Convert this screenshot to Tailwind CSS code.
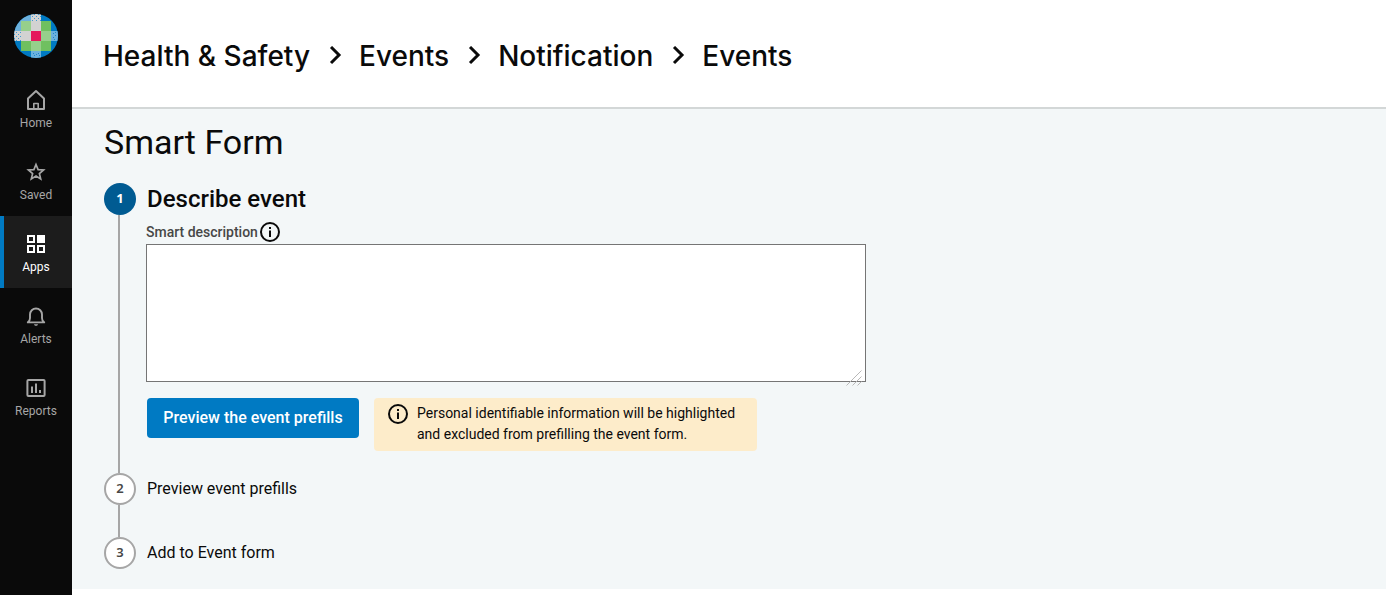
<!DOCTYPE html>
<html lang="en">
<head>
<meta charset="utf-8">
<meta name="viewport" content="width=device-width, initial-scale=1">
<title>Smart Form</title>
<script src="https://cdn.jsdelivr.net/npm/@tailwindcss/browser@4"></script>
</head>
<body class="bg-white font-['Roboto',sans-serif] text-[#0a0a0a]">
<div class="flex min-h-screen">
  <nav aria-label="Main" class="w-18 shrink-0 bg-[#0a0a0a] text-xs leading-4 text-[#a6a6a6]">
    <a href="#" aria-label="Start page" class="flex h-18 items-center justify-center">
      <svg class="size-11" viewBox="0 0 44 44" aria-hidden="true">
        <defs>
          <clipPath id="disc"><circle cx="22" cy="22" r="22"/></clipPath>
          <pattern id="dots" width="4" height="4" patternUnits="userSpaceOnUse"><rect width="4" height="4" fill="#d4d4d4"/><path d="M0 0h1v1H0zM2 2h1v1H2z" fill="#409bd2"/></pattern>
        </defs>
        <g clip-path="url(#disc)" shape-rendering="crispEdges">
          <path fill="#007ac3" d="M0 0h44v44H0z"/>
          <path fill="#6cb1dd" d="M0 0h17v7H7v10H0zM37 17h7v10h-7zM17 37h10v7H17z"/>
          <path fill="url(#dots)" d="M17 0h10v7H17zM0 17h7v10H0z"/>
          <path fill="#6fc060" d="M27 7h10v10H27zM7 27h10v10H7zM27 27h10v10H27z"/>
          <path fill="#96cf8b" d="M7 7h10v10H7zM27 17h10v10H27zM17 27h10v10H17z"/>
          <path fill="#d2d2d2" d="M17 7h10v10H17zM7 17h10v10H7z"/>
          <path fill="#e5175c" d="M17 17h10v10H17z"/>
          <path fill="#1c86c8" d="M39 19h1v1h-1zM41 21h1v1h-1zM39 23h1v1h-1zM41 18h1v1h-1zM40 25h1v1h-1zM19 39h1v1h-1zM22 40h1v1h-1zM24 39h1v1h-1zM20 41h1v1h-1zM25 41h1v1h-1z"/>
        </g>
      </svg>
    </a>
    <a href="#" class="flex h-18 flex-col items-center gap-[3px] pt-4">
      <svg class="size-6" viewBox="0 0 24 24" fill="none" stroke="currentColor" stroke-width="2" stroke-linejoin="round" aria-hidden="true"><path d="M4 10.500 12 3l8 7.500V21H4z"/><path d="M9.800 21v-5.500h4.400V21" stroke-width="1.600"/></svg>
      <span>Home</span>
    </a>
    <a href="#" class="flex h-18 flex-col items-center gap-[3px] pt-4">
      <svg class="size-6" viewBox="0 0 24 24" fill="none" stroke="currentColor" stroke-width="1.700" aria-hidden="true"><path d="m12 4.500 2.100 5.100 5.500.4-4.200 3.600 1.300 5.400-4.700-2.900L7.300 19l1.300-5.400L4.400 10l5.500-.4z"/></svg>
      <span>Saved</span>
    </a>
    <a href="#" aria-current="page" class="flex h-18 flex-col items-center gap-[3px] border-l-4 border-[#007ac3] bg-[#1c1c1c] pt-4 pr-1 text-white">
      <svg class="size-6" viewBox="0 0 24 24" fill="currentColor" fill-rule="evenodd" aria-hidden="true"><path d="M3 3h8v8H3zm2 2v4h4V5zM13 3h8v8h-8zM3 13h8v8H3zm2 2v4h4v-4zM13 13h8v8h-8zm2 2v4h4v-4z"/></svg>
      <span>Apps</span>
    </a>
    <a href="#" class="flex h-18 flex-col items-center gap-[3px] pt-4">
      <svg class="size-6" viewBox="0 0 24 24" aria-hidden="true"><path d="M3.800 18.400c1.700-1 2.200-2.200 2.200-4.400v-3.500a6 6 0 0 1 12 0V14c0 2.200.5 3.400 2.200 4.400z" fill="none" stroke="currentColor" stroke-width="1.900" stroke-linejoin="round"/><path d="M10 20.200h4c-.3 1-1 1.500-2 1.500s-1.700-.5-2-1.500z" fill="currentColor"/></svg>
      <span>Alerts</span>
    </a>
    <a href="#" class="flex h-18 flex-col items-center gap-[3px] pt-4">
      <svg class="size-6" viewBox="0 0 24 24" fill="none" stroke="currentColor" stroke-width="2" aria-hidden="true"><rect x="3.400" y="3.900" width="17.200" height="16.200" rx="1"/><path d="M8 10.500V17M12 7.500V17M16 14v3"/></svg>
      <span>Reports</span>
    </a>
  </nav>

  <div class="min-w-0 flex-1">
    <header class="border-b-2 border-[#d3d7d7] px-[31px] pt-9 pb-[31px]">
      <ol class="flex flex-wrap items-center font-['Inter',sans-serif] text-[28px] leading-10 font-medium">
        <li><a href="#">Health &amp; Safety</a></li>
        <li aria-hidden="true" class="pr-[15px] pl-[18px]"><svg class="h-5 w-4" viewBox="0 0 16 20" fill="none" stroke="currentColor" stroke-width="3"><path d="m3 1 8 8-8 8"/></svg></li>
        <li><a href="#">Events</a></li>
        <li aria-hidden="true" class="pr-[15px] pl-[18px]"><svg class="h-5 w-4" viewBox="0 0 16 20" fill="none" stroke="currentColor" stroke-width="3"><path d="m3 1 8 8-8 8"/></svg></li>
        <li><a href="#">Notification</a></li>
        <li aria-hidden="true" class="pr-[15px] pl-[18px]"><svg class="h-5 w-4" viewBox="0 0 16 20" fill="none" stroke="currentColor" stroke-width="3"><path d="m3 1 8 8-8 8"/></svg></li>
        <li><a href="#" aria-current="page">Events</a></li>
      </ol>
    </header>

    <main class="bg-[#f3f7f8] px-8 pt-3 pb-5">
      <h1 class="text-[34px] leading-[42px]">Smart Form</h1>
      <ol class="pt-5">
        <li class="flex gap-[10px]">
          <div class="flex w-8 shrink-0 flex-col items-center">
            <span class="flex size-8 items-center justify-center rounded-full bg-[#005b92] font-['Noto_Sans',sans-serif] text-[13px] font-bold text-white">1</span>
            <span class="mr-0.5 w-0.5 flex-1 bg-[#a6a6a6]"></span>
          </div>
          <section class="min-w-0 flex-1 pb-[22px]">
            <h2 class="pl-px text-2xl leading-8 font-medium">Describe event</h2>
            <div class="flex h-[29px] items-center gap-px pt-1">
              <label for="description" class="text-sm leading-5 font-medium text-[#474747]">Smart description</label>
              <button type="button" aria-label="About smart description">
                <svg class="size-[22px]" viewBox="0 0 22 22" fill="none" stroke="currentColor" stroke-width="2" aria-hidden="true"><circle cx="11" cy="11" r="9"/><path d="M11 6v2M11 9.500V16"/></svg>
              </button>
            </div>
            <div class="relative max-w-[720px]">
              <textarea id="description" class="block h-[138px] w-full resize-none border border-[#757575] bg-white p-2 text-base"></textarea>
              <svg class="absolute right-1 -bottom-1 size-4" viewBox="0 0 16 16" fill="none" stroke="#b8b8b8" aria-hidden="true"><path d="M.5 15.500 15.500.5M6.500 15.500l9-9M11.500 15.500l4-4"/></svg>
            </div>
            <div class="flex flex-wrap items-start gap-[15px] pt-4 pl-px">
              <button type="button" class="h-10 min-w-[212px] rounded bg-[#007ac3] px-4 text-base font-medium text-white">Preview the event prefills</button>
              <div role="note" class="flex gap-2 rounded bg-[#fdecca] pt-[5px] pr-[22px] pb-1.5 pl-[13px] text-sm leading-[21px]">
                <svg class="size-[22px] shrink-0" viewBox="0 0 22 22" fill="none" stroke="currentColor" stroke-width="2" aria-hidden="true"><circle cx="11" cy="11" r="9"/><path d="M11 6v2M11 9.500V16"/></svg>
                <p>Personal identifiable information will be highlighted<br>and excluded from prefilling the event form.</p>
              </div>
            </div>
          </section>
        </li>
        <li class="flex gap-[11px]">
          <div class="flex w-8 shrink-0 flex-col items-center">
            <span class="flex size-8 items-center justify-center rounded-full border-2 border-[#a6a6a6] bg-white font-['Noto_Sans',sans-serif] text-[13px] font-semibold text-[#474747]">2</span>
            <span class="mr-0.5 w-0.5 flex-1 bg-[#a6a6a6]"></span>
          </div>
          <h2 class="pb-8 text-base leading-8">Preview event prefills</h2>
        </li>
        <li class="flex gap-[11px]">
          <span class="flex size-8 shrink-0 items-center justify-center rounded-full border-2 border-[#a6a6a6] bg-white font-['Noto_Sans',sans-serif] text-[13px] font-semibold text-[#474747]">3</span>
          <h2 class="text-base leading-8">Add to Event form</h2>
        </li>
      </ol>
    </main>
  </div>
</div>
</body>
</html>
